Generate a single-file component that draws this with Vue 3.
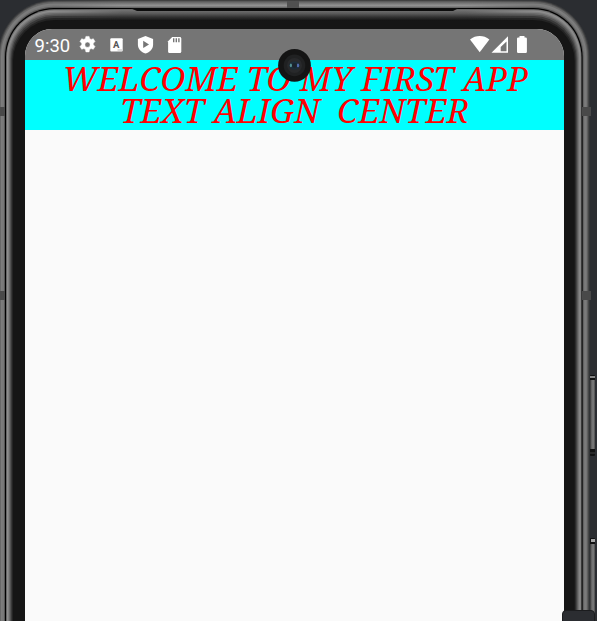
<script setup>
// Nested shells of the device body: left inset, top inset, corner radius, colour
const shells = [
  [-2, 0, 56, '#38393b'], [-1, 1, 55, '#505050'], [0, 2, 54, '#686868'],
  [1, 3.5, 53, '#7c7c7c'], [2.5, 5.3, 51.5, '#777777'], [4, 6.8, 50, '#575757'],
  [5, 7.9, 49, '#000000'], [6.1, 9.3, 48, '#727272'], [7, 10.5, 47, '#8e8e8e'],
  [8, 11.8, 46, '#808080'], [9, 13, 45, '#6b6b6b'], [10, 14.4, 44, '#535353'],
  [11, 16, 43, '#393939'], [12, 18, 42, '#242424'], [13, 20, 41, '#151515']
].map(([x, y, r, fill]) => ({ x, y, r, fill, w: 587.6 - 2 * x }))
const bands = [[0, 107], [0, 291], [582, 107], [582, 291]]
</script>

<template>
  <main class="stage">
    <svg class="frame" width="597" height="621" viewBox="0 0 597 621">
      <defs>
        <linearGradient id="key"><stop offset="0" stop-color="#343434" /><stop offset=".4" stop-color="#737373" /><stop offset=".75" stop-color="#777" /><stop offset="1" stop-color="#464646" /></linearGradient>
        <linearGradient id="topline" x1="0" x2="0" y1="0" y2="1">
          <stop offset="0" stop-color="#343434" /><stop offset=".22" stop-color="#606060" />
          <stop offset=".7" stop-color="#929292" /><stop offset="1" stop-color="#6c6c6c" />
        </linearGradient>
        <linearGradient id="topshade" x1="0" x2="0" y1="0" y2="1">
          <stop offset="0" stop-color="#757575" /><stop offset=".35" stop-color="#5b5b5b" />
          <stop offset=".7" stop-color="#303030" /><stop offset="1" stop-color="#151515" />
        </linearGradient>
        <linearGradient id="fade">
          <stop offset="0" stop-color="#000" /><stop offset=".14" stop-color="#fff" />
          <stop offset=".86" stop-color="#fff" /><stop offset="1" stop-color="#000" />
        </linearGradient>
        <mask id="ends" maskUnits="userSpaceOnUse" x="55" y="0" width="478" height="24"><rect x="55" width="478" height="24" fill="url(#fade)" /></mask>
      </defs>
      <rect width="597" height="621" fill="#2b2d31" />
      <rect v-for="(s, i) in shells" :key="i" :x="s.x" :y="s.y" :width="s.w" height="760" :rx="s.r" :fill="s.fill" />
      <g mask="url(#ends)">
        <rect x="55" y="0" width="478" height="7.7" fill="url(#topline)" />
        <rect x="55" y="9.5" width="478" height="11" fill="url(#topshade)" />
      </g>
      <path d="M130 8h329l-6 3H137z" fill="#0c0c0c" />
      <rect x="287" y="1" width="12" height="7" fill="#505050" />
      <rect v-for="(b, i) in bands" :key="'b' + i" :x="b[0]" :y="b[1]" :width="b[0] ? 9 : 5" height="9" fill="#494949" />
      <rect x="590" y="375" width="5" height="81" rx="1" fill="#111" />
      <rect x="590" y="376" width="5" height="2" fill="#858585" />
      <rect x="590" y="380" width="5" height="69" fill="url(#key)" />
      <rect x="590" y="452" width="5" height="2" fill="#282828" />
      <rect x="590" y="538" width="5" height="83" rx="1" fill="#111" />
      <rect x="591" y="539" width="4" height="3" fill="#a5a5a5" />
      <rect x="590" y="544" width="5" height="77" fill="url(#key)" />
    </svg>
    <section class="screen">
      <header class="status">
        <span class="time">9:30</span>
        <svg class="left-icons" width="120" height="31" viewBox="75 29 120 31">
          <g fill="#fff">
            <path fill-rule="evenodd" d="M85.9 36.4h3.2l.5 2.2 1.5.8 2.2-.7 1.7 2.8-1.7 1.7v1.6l1.7 1.7-1.7 2.8-2.2-.7-1.5.9-.5 2.4h-3.2l-.5-2.4-1.5-.9-2.2.7-1.7-2.8 1.7-1.7v-1.6L80 41.5l1.7-2.8 2.2.7 1.5-.8zM87.5 42.1a2.6 2.6 0 1 0 0 5.2 2.6 2.6 0 0 0 0-5.2z" stroke="#fff" stroke-width=".5" />
            <rect x="110.3" y="38.2" width="12.4" height="13.2" rx="1" />
            <path d="M145.5 36l7.6 2.9v5.5c0 4.5-3.3 7.8-7.6 9.2-4.3-1.4-7.6-4.7-7.6-9.2v-5.5z" />
            <path d="M172.2 37h7.7q1.4 0 1.4 1.4v13q0 1.5-1.4 1.5h-10.4q-1.4 0-1.4-1.5V41.3z" />
          </g>
          <text x="116.3" y="48.2" text-anchor="middle" class="letter">A</text>
          <path d="M117.5 50h4.5" stroke="#aaa" stroke-width=".8" />
          <path d="M143.2 40.8v7.2l5.8-3.6z" fill="#757575" />
          <path d="M173.7 38.2v4M176.3 38.2v4M178.9 38.2v4" stroke="#757575" stroke-width="1.4" />
        </svg>
        <svg class="right-icons" width="64" height="31" viewBox="465 29 64 31">
          <path d="M470 39.5c5.8-4.6 13.7-4.6 19.4 0L479.7 52.3z" fill="#fff" />
          <path fill-rule="evenodd" d="M508 36.3v16.5h-16.5zM506.5 41.5l-5.8 5.6v4.1h5.8z" fill="#fff" />
          <path d="M519.5 36h5v1.6h1.2q1.2 0 1.2 1.2v13q0 1.2-1.2 1.2h-7.5q-1.2 0-1.2-1.2v-13q0-1.2 1.2-1.2h1.3z" fill="#fff" />
        </svg>
      </header>
      <svg class="banner" width="539" height="70" viewBox="25 60 539 70">
        <text x="62.5" y="91" textLength="465.5" lengthAdjust="spacingAndGlyphs">WELCOME TO MY FIRST APP</text>
        <text x="120" y="122.5" textLength="349" lengthAdjust="spacingAndGlyphs">TEXT ALIGN&nbsp;&nbsp;CENTER</text>
      </svg>
    </section>
    <svg class="camera" width="34" height="34" viewBox="0 0 34 34">
      <circle cx="16.5" cy="16.4" r="16.4" fill="#141414" />
      <circle cx="16.5" cy="16.4" r="10.8" fill="#202122" />
      <circle cx="16.5" cy="16.4" r="7.5" fill="#28292b" />
      <ellipse cx="16.5" cy="16.4" rx="5.5" ry="4" fill="#1d2c39" />
      <ellipse cx="12.9" cy="16.4" rx="1.1" ry="1.8" fill="#548f92" />
      <ellipse cx="20" cy="16.4" rx="1.2" ry="1.9" fill="#5069ac" />
      <circle cx="16.5" cy="16.4" r="2.3" fill="#1b232b" />
    </svg>
    <div class="corner"><svg width="35" height="11"><path d="M15.5 8.5v3" stroke="#aaa" /></svg></div>
  </main>
</template>

<style>
body { overflow: hidden; background: #2b2d31; }
</style>
<style scoped>
.stage { position: relative; box-sizing: border-box; width: 597px; height: 621px; padding: 29px 33px 0 25px; overflow: hidden; }
.frame { position: absolute; inset: 0; }
.screen { position: relative; height: 592px; background: #fafafa; border-radius: 27px 27px 0 0; overflow: hidden; }
.status { height: 31px; display: flex; background: #757575; }
.time { width: 50px; box-sizing: border-box; padding-left: 9.5px; color: #fff; font: 18.5px/34px Roboto, sans-serif; }
.right-icons { margin-left: 270px; }
.letter { font: bold 9.5px Roboto, sans-serif; fill: #555; }
.banner { display: block; background: #0ff; }
.banner text { font: italic 33.5px "Noto Serif", "Liberation Serif", serif; fill: #f00; }
.camera { position: absolute; left: 278px; top: 49px; }
.corner { position: absolute; left: 562px; top: 610px; width: 33px; height: 20px; border: 1px solid #1b1c1e; border-radius: 4px; background: #2b2d31; box-sizing: border-box; overflow: hidden; }
</style>
